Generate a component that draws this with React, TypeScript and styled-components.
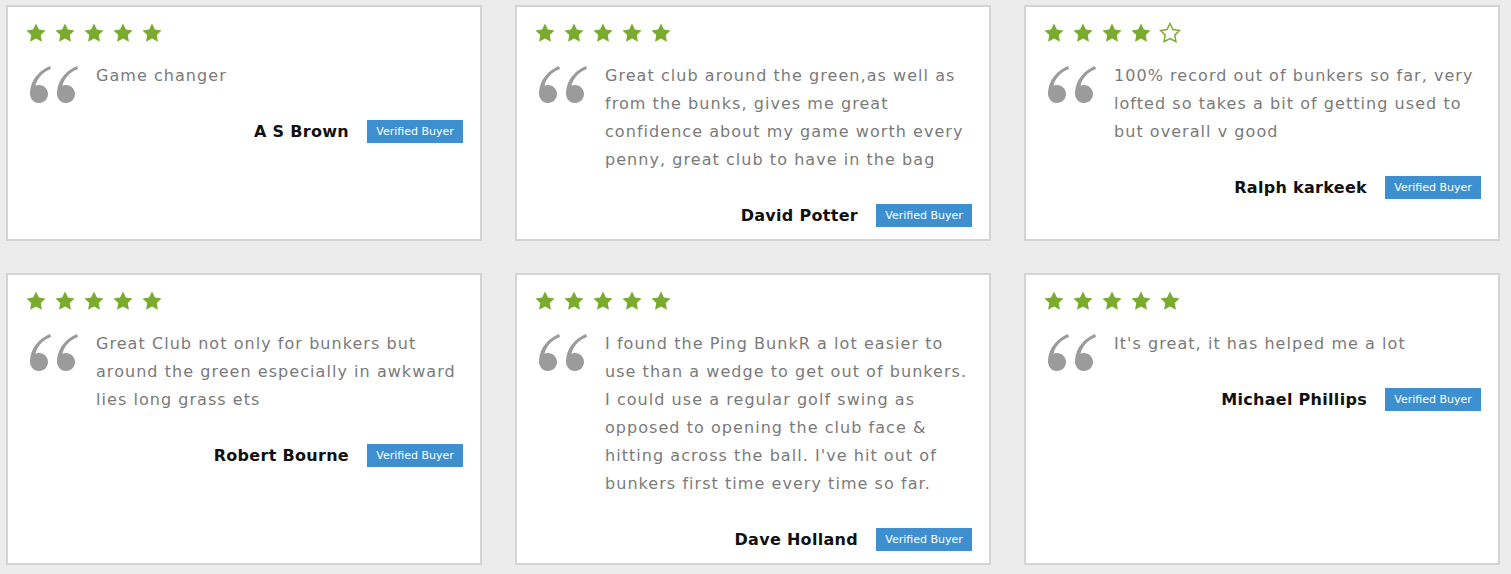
import styled, { createGlobalStyle } from "styled-components";

const GlobalStyle = createGlobalStyle`
  body {
    margin: 0;
    background: #ececec;
    font-family: "DejaVu Sans", "Liberation Sans", sans-serif;
  }
`;

const reviews = [
  { rating: 5, text: "Game changer", name: "A S Brown" },
  {
    rating: 5,
    text: "Great club around the green,as well as from the bunks, gives me great confidence about my game worth every penny, great club to have in the bag",
    name: "David Potter",
  },
  {
    rating: 4,
    text: "100% record out of bunkers so far, very lofted so takes a bit of getting used to but overall v good",
    name: "Ralph karkeek",
  },
  {
    rating: 5,
    text: "Great Club not only for bunkers but around the green especially in awkward lies long grass ets",
    name: "Robert Bourne",
  },
  {
    rating: 5,
    text: "I found the Ping BunkR a lot easier to use than a wedge to get out of bunkers. I could use a regular golf swing as opposed to opening the club face & hitting across the ball. I've hit out of bunkers first time every time so far.",
    name: "Dave Holland",
  },
  { rating: 5, text: "It's great, it has helped me a lot", name: "Michael Phillips" },
];

const Grid = styled.div`
  display: grid;
  grid-template-columns: repeat(3, 476px);
  column-gap: 33px;
  row-gap: 32px;
  padding: 5px 6px;
`;

const Card = styled.div`
  display: flex;
  flex-direction: column;
  background: #fff;
  border: 2px solid #d4d4d4;
  padding: 15px 17px 12px 17px;
`;

const Stars = styled.div`
  display: flex;
  gap: 7px;
  height: 22px;
`;

const Body = styled.div`
  display: flex;
  align-items: flex-start;
  margin-top: 18px;
`;

const QuoteMark = styled.svg`
  flex: none;
  width: 50px;
  height: 38px;
  margin: 3px 0 -13px 3px;
  color: #9b9b9b;
`;

const Text = styled.p`
  margin: 0 0 0 18px;
  font-size: 16px;
  line-height: 28px;
  color: #7a7a7a;
  letter-spacing: 1.05px;
`;

const Footer = styled.div`
  display: flex;
  justify-content: flex-end;
  align-items: center;
  gap: 18px;
  margin-top: 30px;
`;

const Name = styled.span`
  font-size: 16px;
  font-weight: bold;
  color: #111;
  letter-spacing: 0.3px;
`;

const Badge = styled.span`
  background: #3d8fcf;
  color: #fff;
  font-size: 11px;
  height: 23px;
  line-height: 23px;
  width: 96px;
  text-align: center;
  white-space: nowrap;
`;

const Star = ({ filled }: { filled: boolean }) => (
  <svg width="22" height="22" viewBox="0 0 24 24">
    <path
      d="M12 1.6l3.2 6.6 7.2 1-5.2 5.1 1.25 7.2L12 18.1l-6.45 3.4 1.25-7.2-5.2-5.1 7.2-1z"
      fill={filled ? "#7aab2f" : "none"}
      stroke="#7aab2f"
      strokeWidth={filled ? 0 : 1.6}
      strokeLinejoin="miter"
    />
  </svg>
);

const Quote = () => (
  <QuoteMark viewBox="0 0 50 38">
    <path
      fill="currentColor"
      d="M22 1C12 5 3 14 2 27c-.5 6 3 11 9 11 5 0 9-4 9-9s-4-9-9-9c-1.5 0-2.5.3-3.5 1C9 13 15 7 23 4z"
    />
    <path
      fill="currentColor"
      d="M49 1C39 5 30 14 29 27c-.5 6 3 11 9 11 5 0 9-4 9-9s-4-9-9-9c-1.5 0-2.5.3-3.5 1C36 13 42 7 50 4z"
    />
  </QuoteMark>
);

export default function App() {
  return (
    <>
      <GlobalStyle />
      <Grid>
        {reviews.map((r) => (
          <Card key={r.name}>
            <Stars>
              {[0, 1, 2, 3, 4].map((i) => (
                <Star key={i} filled={i < r.rating} />
              ))}
            </Stars>
            <Body>
              <Quote />
              <Text>{r.text}</Text>
            </Body>
            <Footer>
              <Name>{r.name}</Name>
              <Badge>Verified Buyer</Badge>
            </Footer>
          </Card>
        ))}
      </Grid>
    </>
  );
}
